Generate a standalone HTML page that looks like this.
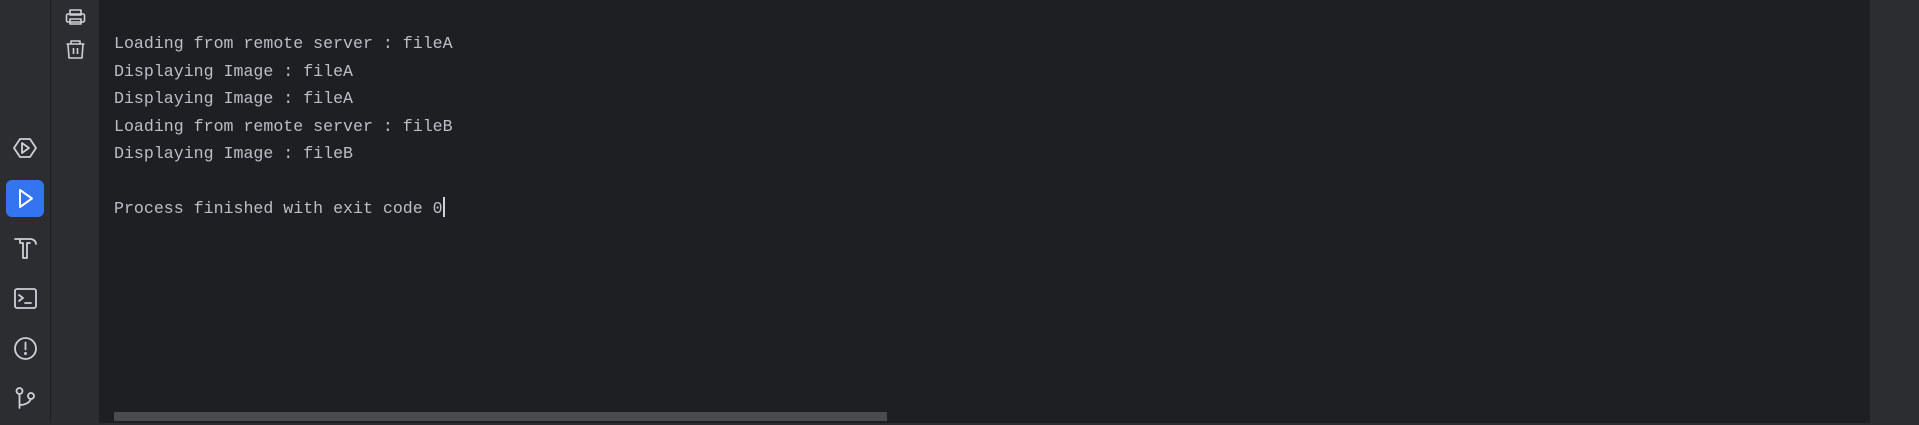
<!DOCTYPE html>
<html><head><style>
body{margin:0;width:1919px;height:425px;background:#1e1f22;overflow:hidden;position:relative;font-family:"Liberation Mono",monospace}
.side{position:absolute;left:0;top:0;width:50px;height:423px;background:#2b2d30;border-right:1px solid #1e1f22}
.tool{position:absolute;left:51px;top:0;width:48px;height:423px;background:#2b2d30}
.right{position:absolute;left:1870px;top:0;width:49px;height:423px;background:#2b2d30}
.bot{position:absolute;left:0;top:423px;width:1919px;height:2px;background:#2b2d30}
.txt{position:absolute;left:114px;top:30px;color:#bcbec4;font-size:16.6px;line-height:27.5px;white-space:pre}
.sb{position:absolute;left:114px;top:412px;width:773px;height:9px;background:#4a4b4e}
svg{position:absolute}
.blue{position:absolute;left:6px;top:180px;width:38px;height:37px;background:#3574f0;border-radius:6px}
.cur{display:inline-block;width:2px;height:20px;background:#ced0d6;vertical-align:-4px}
</style></head><body>
<div class="side"></div><div class="tool"></div><div class="right"></div><div class="bot"></div>
<div class="blue"></div>
<svg width="50" height="425" viewBox="0 0 50 425" fill="none" stroke="#ced0d6" stroke-width="1.8" stroke-linejoin="round" stroke-linecap="round">
<path d="M20 139h10l6 9-6 9H20l-6-9z"/><path d="M22 143l7 5-7 5z"/>
<path d="M20 190l12 8.5-12 8.5z" stroke="#fff" stroke-width="2"/>
<path d="M15 239h15c3 0 6 2 6 5M20 239v4h3v15h4v-15h3"/>
<rect x="15" y="289" width="21" height="19" rx="2"/><path d="M19 295l4 3-4 3M25 303h6"/>
<circle cx="25.5" cy="348.5" r="10.5"/><path d="M25.5 342.5v7"/><circle cx="25.5" cy="353.5" r=".6"/>
<circle cx="19.5" cy="391" r="3"/><circle cx="31" cy="396" r="3"/><path d="M19.5 394v14M19.5 405c6 0 11-3 11-6"/>
</svg>
<svg width="100" height="80" viewBox="0 0 100 80" fill="none" stroke="#ced0d6" stroke-width="1.6" stroke-linejoin="round">
<rect x="70" y="10" width="11" height="5"/><rect x="66.5" y="14" width="18" height="8" rx="1.5"/><rect x="70" y="19" width="11" height="5"/>
<path d="M66.5 44h18M71 44v-3h9v3M68 44l1 14h13l1-14M73.5 48v6M77.5 48v6"/>
</svg>
<div class="txt">Loading from remote server : fileA
Displaying Image : fileA
Displaying Image : fileA
Loading from remote server : fileB
Displaying Image : fileB

Process finished with exit code 0<span class="cur"></span></div>
<div class="sb"></div>
</body></html>
